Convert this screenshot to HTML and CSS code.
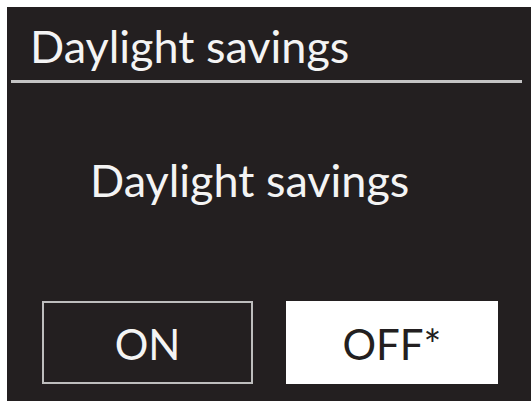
FILE: index.html
```html
<!DOCTYPE html>
<html>
<head>
<meta charset="utf-8">
<link rel="stylesheet" href="styles.css">
</head>
<body>
<div class="screen">
  <div class="header">
    <div class="title">Daylight savings</div>
  </div>
  <div class="message">Daylight savings</div>
  <div class="buttons">
    <div class="btn btn-on">ON</div>
    <div class="btn btn-off">OFF*</div>
  </div>
</div>
</body>
</html>
```
FILE: styles.css
```css
html, body {
  margin: 0;
  padding: 0;
  background: #ffffff;
}
body {
  width: 531px;
  height: 401px;
  overflow: hidden;
}
.screen {
  margin: 7px 0 0 7px;
  width: 524px;
  height: 394px;
  background: #231f20;
  color: #f4f4f4;
  font-family: "Lato", "Open Sans", sans-serif;
  display: flex;
  flex-direction: column;
}
.header {
  margin: 0 9px 0 4px;
  height: 76px;
  border-bottom: 3px solid #c4c4c4;
  box-sizing: border-box;
  display: flex;
  align-items: flex-end;
}
.title {
  font-size: 45px;
  line-height: 1;
  padding: 0 0 11px 19px;
}
.message {
  font-size: 45px;
  line-height: 1;
  padding: 75px 0 0 83px;
}
.buttons {
  display: flex;
  gap: 33px;
  margin-top: 98px;
  padding-left: 35px;
}
.btn {
  height: 83px;
  box-sizing: border-box;
  display: flex;
  align-items: center;
  justify-content: center;
  font-size: 42px;
  padding-top: 2px;
}
.btn-on {
  width: 211px;
  border: 2px solid #bdbdbd;
  color: #f4f4f4;
}
.btn-off {
  width: 212px;
  background: #ffffff;
  color: #231f20;
}
```
